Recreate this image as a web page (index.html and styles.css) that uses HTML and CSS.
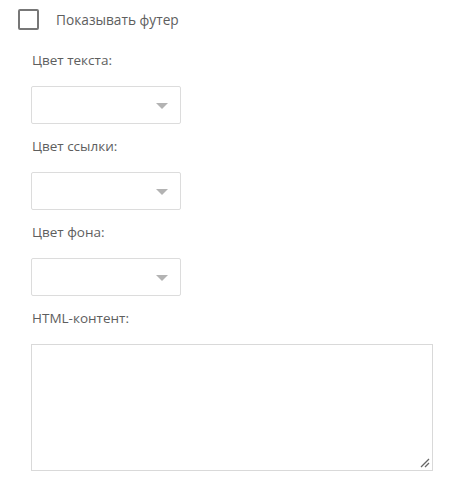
FILE: index.html
```html
<!DOCTYPE html>
<html lang="ru">
<head>
<meta charset="utf-8">
<link rel="stylesheet" href="styles.css">
</head>
<body>
<div class="panel">
  <label class="check-row">
    <span class="checkbox"></span>
    <span class="check-label">Показывать футер</span>
  </label>
  <div class="fields">
    <div class="field">
      <div class="label">Цвет текста:</div>
      <div class="select"><span class="arrow"></span></div>
    </div>
    <div class="field">
      <div class="label">Цвет ссылки:</div>
      <div class="select"><span class="arrow"></span></div>
    </div>
    <div class="field">
      <div class="label">Цвет фона:</div>
      <div class="select"><span class="arrow"></span></div>
    </div>
    <div class="field">
      <div class="label">HTML-контент:</div>
      <div class="textarea">
        <svg class="grip" width="10" height="10" viewBox="0 0 10 10"><path d="M9 1 L1 9 M9 5 L5 9" stroke="#666" stroke-width="1.3" fill="none"/></svg>
      </div>
    </div>
  </div>
</div>
</body>
</html>
```
FILE: styles.css
```css
html, body {
  margin: 0;
  padding: 0;
  background: #fff;
}
body {
  font-family: "Open Sans", "Noto Sans", sans-serif;
  font-size: 13.5px;
  color: #5e5e5e;
}
.panel {
  padding: 8px 0 0 18px;
}
.check-row {
  display: flex;
  align-items: center;
  gap: 17px;
  height: 22px;
}
.checkbox {
  box-sizing: border-box;
  width: 21px;
  height: 21px;
  border: 2px solid #777;
  border-radius: 2px;
}
.check-label {
  font-size: 13.7px;
  padding-top: 1px;
}
.fields {
  padding-left: 13px;
  padding-top: 18px;
}
.field {
  display: flex;
  flex-direction: column;
}
.label {
  height: 20px;
  line-height: 20px;
  padding-top: 2px;
  margin-bottom: 16px;
  padding-left: 1px;
}
.select {
  box-sizing: border-box;
  width: 150px;
  height: 38px;
  border: 1px solid #dcdcdc;
  border-radius: 2px;
  position: relative;
  margin-bottom: 10px;
}
.arrow {
  position: absolute;
  right: 12px;
  top: 16px;
  width: 0;
  height: 0;
  border-left: 6px solid transparent;
  border-right: 6px solid transparent;
  border-top: 6px solid #b3b3b3;
}
.textarea {
  box-sizing: border-box;
  width: 402px;
  height: 127px;
  border: 1px solid #d9d9d9;
  position: relative;
}
.grip {
  position: absolute;
  right: 2px;
  bottom: 2px;
}
```
